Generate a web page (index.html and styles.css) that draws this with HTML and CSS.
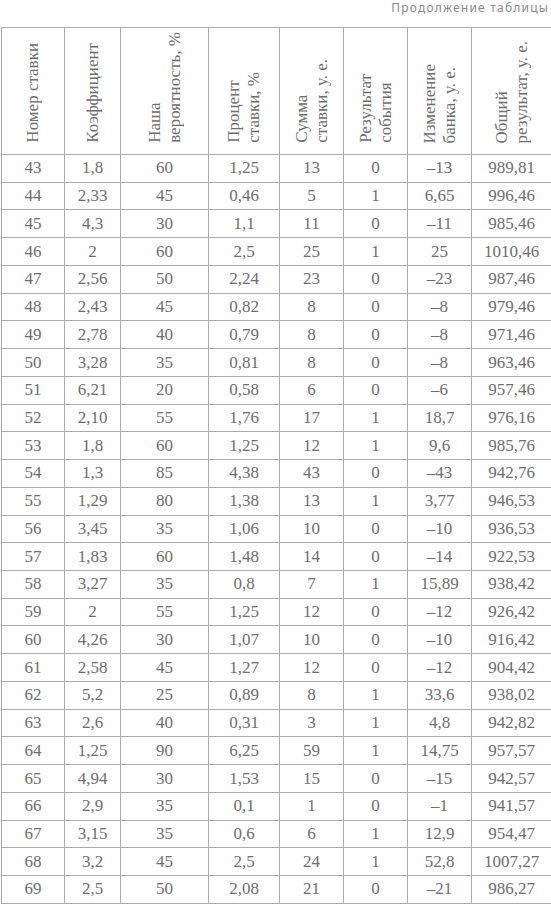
FILE: index.html
```html
<!DOCTYPE html>
<html lang="ru">
<head>
<meta charset="utf-8">
<title>Продолжение таблицы</title>
<link rel="stylesheet" href="styles.css">
</head>
<body>
<div class="caption">Продолжение таблицы</div>
<table class="bets">
<colgroup>
<col class="c1"><col class="c2"><col class="c3"><col class="c4"><col class="c5"><col class="c6"><col class="c7"><col class="c8">
</colgroup>
<thead>
<tr>
<th><div class="rot">Номер ставки</div></th>
<th><div class="rot">Коэффициент</div></th>
<th><div class="rot">Наша<br>вероятность, %</div></th>
<th><div class="rot">Процент<br>ставки, %</div></th>
<th><div class="rot">Сумма<br>ставки, у. е.</div></th>
<th><div class="rot">Результат<br>события</div></th>
<th><div class="rot">Изменение<br>банка, у. е.</div></th>
<th><div class="rot">Общий<br>результат, у. е.</div></th>
</tr>
</thead>
<tbody>
<tr><td>43</td><td>1,8</td><td>60</td><td>1,25</td><td>13</td><td>0</td><td>–13</td><td>989,81</td></tr>
<tr><td>44</td><td>2,33</td><td>45</td><td>0,46</td><td>5</td><td>1</td><td>6,65</td><td>996,46</td></tr>
<tr><td>45</td><td>4,3</td><td>30</td><td>1,1</td><td>11</td><td>0</td><td>–11</td><td>985,46</td></tr>
<tr><td>46</td><td>2</td><td>60</td><td>2,5</td><td>25</td><td>1</td><td>25</td><td>1010,46</td></tr>
<tr><td>47</td><td>2,56</td><td>50</td><td>2,24</td><td>23</td><td>0</td><td>–23</td><td>987,46</td></tr>
<tr><td>48</td><td>2,43</td><td>45</td><td>0,82</td><td>8</td><td>0</td><td>–8</td><td>979,46</td></tr>
<tr><td>49</td><td>2,78</td><td>40</td><td>0,79</td><td>8</td><td>0</td><td>–8</td><td>971,46</td></tr>
<tr><td>50</td><td>3,28</td><td>35</td><td>0,81</td><td>8</td><td>0</td><td>–8</td><td>963,46</td></tr>
<tr><td>51</td><td>6,21</td><td>20</td><td>0,58</td><td>6</td><td>0</td><td>–6</td><td>957,46</td></tr>
<tr><td>52</td><td>2,10</td><td>55</td><td>1,76</td><td>17</td><td>1</td><td>18,7</td><td>976,16</td></tr>
<tr><td>53</td><td>1,8</td><td>60</td><td>1,25</td><td>12</td><td>1</td><td>9,6</td><td>985,76</td></tr>
<tr><td>54</td><td>1,3</td><td>85</td><td>4,38</td><td>43</td><td>0</td><td>–43</td><td>942,76</td></tr>
<tr><td>55</td><td>1,29</td><td>80</td><td>1,38</td><td>13</td><td>1</td><td>3,77</td><td>946,53</td></tr>
<tr><td>56</td><td>3,45</td><td>35</td><td>1,06</td><td>10</td><td>0</td><td>–10</td><td>936,53</td></tr>
<tr><td>57</td><td>1,83</td><td>60</td><td>1,48</td><td>14</td><td>0</td><td>–14</td><td>922,53</td></tr>
<tr><td>58</td><td>3,27</td><td>35</td><td>0,8</td><td>7</td><td>1</td><td>15,89</td><td>938,42</td></tr>
<tr><td>59</td><td>2</td><td>55</td><td>1,25</td><td>12</td><td>0</td><td>–12</td><td>926,42</td></tr>
<tr><td>60</td><td>4,26</td><td>30</td><td>1,07</td><td>10</td><td>0</td><td>–10</td><td>916,42</td></tr>
<tr><td>61</td><td>2,58</td><td>45</td><td>1,27</td><td>12</td><td>0</td><td>–12</td><td>904,42</td></tr>
<tr><td>62</td><td>5,2</td><td>25</td><td>0,89</td><td>8</td><td>1</td><td>33,6</td><td>938,02</td></tr>
<tr><td>63</td><td>2,6</td><td>40</td><td>0,31</td><td>3</td><td>1</td><td>4,8</td><td>942,82</td></tr>
<tr><td>64</td><td>1,25</td><td>90</td><td>6,25</td><td>59</td><td>1</td><td>14,75</td><td>957,57</td></tr>
<tr><td>65</td><td>4,94</td><td>30</td><td>1,53</td><td>15</td><td>0</td><td>–15</td><td>942,57</td></tr>
<tr><td>66</td><td>2,9</td><td>35</td><td>0,1</td><td>1</td><td>0</td><td>–1</td><td>941,57</td></tr>
<tr><td>67</td><td>3,15</td><td>35</td><td>0,6</td><td>6</td><td>1</td><td>12,9</td><td>954,47</td></tr>
<tr><td>68</td><td>3,2</td><td>45</td><td>2,5</td><td>24</td><td>1</td><td>52,8</td><td>1007,27</td></tr>
<tr><td>69</td><td>2,5</td><td>50</td><td>2,08</td><td>21</td><td>0</td><td>–21</td><td>986,27</td></tr>
</tbody>
</table>
</body>
</html>
```

FILE: styles.css
```css
html, body {
  margin: 0;
  padding: 0;
  background: #ffffff;
}

body {
  width: 551px;
  overflow: hidden;
  font-family: "Liberation Serif", "Times New Roman", serif;
  color: #6e6e6e;
}

.caption {
  height: 27px;
  box-sizing: border-box;
  padding: 0 2px 0 0;
  text-align: right;
  font-family: "Noto Sans", "DejaVu Sans", sans-serif;
  font-size: 12px;
  line-height: 16px;
  letter-spacing: 1.2px;
  color: #8a8a8a;
}

.bets {
  border-collapse: collapse;
  table-layout: fixed;
  width: 550px;
  margin-left: 1px;
  font-size: 17px;
}

.c1 { width: 63px; }
.c2 { width: 56px; }
.c3 { width: 88px; }
.c4 { width: 71px; }
.c5 { width: 64px; }
.c6 { width: 64px; }
.c7 { width: 64px; }
.c8 { width: 80px; }

.bets th,
.bets td {
  border: 1px solid #ababab;
  padding: 0;
  text-align: center;
}

.bets th {
  height: 120px;
  vertical-align: bottom;
  font-weight: normal;
  padding-bottom: 6px;
}

.rot {
  display: inline-block;
  writing-mode: vertical-rl;
  transform: rotate(180deg);
  text-align: left;
  line-height: 20px;
  white-space: nowrap;
}

.bets tbody tr {
  height: 27.74px;
}

.bets td {
  line-height: 20px;
  vertical-align: middle;
}
```
